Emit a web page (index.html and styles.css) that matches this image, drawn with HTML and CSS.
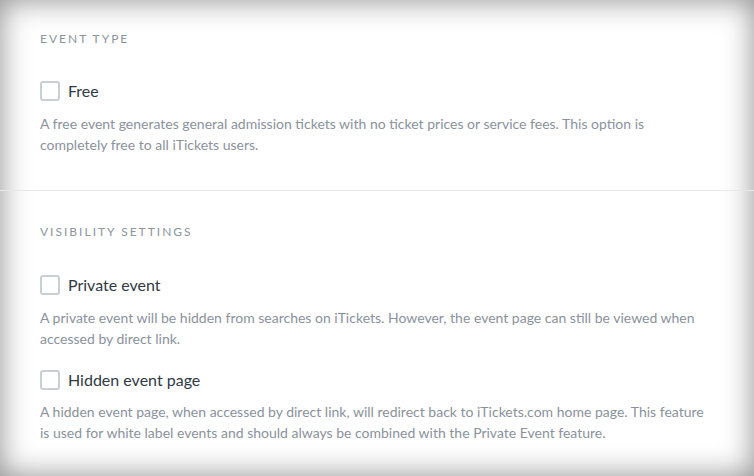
FILE: index.html
```html
<!DOCTYPE html>
<html>
<head>
<meta charset="utf-8">
<link rel="stylesheet" href="styles.css">
</head>
<body>
<div class="frame">
  <section class="section first">
    <h2 class="heading">Event type</h2>
    <label class="option">
      <span class="box"></span>
      <span class="label">Free</span>
    </label>
    <p class="desc">A free event generates general admission tickets with no ticket prices or service fees. This option is completely free to all iTickets users.</p>
  </section>
  <section class="section second">
    <h2 class="heading">Visibility settings</h2>
    <label class="option">
      <span class="box"></span>
      <span class="label">Private event</span>
    </label>
    <p class="desc">A private event will be hidden from searches on iTickets. However, the event page can still be viewed when accessed by direct link.</p>
    <label class="option">
      <span class="box"></span>
      <span class="label">Hidden event page</span>
    </label>
    <p class="desc">A hidden event page, when accessed by direct link, will redirect back to iTickets.com home page. This feature is used for white label events and should always be combined with the Private Event feature.</p>
  </section>
</div>
</body>
</html>
```

FILE: styles.css
```css
html, body {
  margin: 0;
  padding: 0;
  width: 754px;
  height: 476px;
  overflow: hidden;
  background: #fff;
}
body {
  font-family: Lato, "Noto Sans", sans-serif;
}
.frame {
  width: 754px;
  height: 476px;
  box-sizing: border-box;
  box-shadow: inset 0 0 30px rgba(0,0,0,0.45);
}
.section {
  padding: 0 40px;
}
.first {
  padding-top: 31px;
  padding-bottom: 35px;
  border-bottom: 1px solid #e6e9ec;
}
.second {
  padding-top: 33px;
}
.heading {
  margin: 0;
  font-size: 12px;
  font-weight: 400;
  letter-spacing: 2px;
  text-transform: uppercase;
  color: #8c949d;
  line-height: 16px;
}
.option {
  display: flex;
  align-items: center;
  gap: 8px;
  margin-top: 35px;
}
.first .option { margin-top: 34px; }
.box {
  width: 20px;
  height: 20px;
  box-sizing: border-box;
  border: 2px solid #c8d0d4;
  border-radius: 3px;
  background: #fff;
}
.label {
  font-size: 16px;
  color: #2f3944;
  line-height: 20px;
}
.desc {
  margin: 12px 0 0;
  font-size: 14px;
  line-height: 21px;
  color: #8a929c;
}
.desc + .option { margin-top: 21px; }
.desc + .option + .desc { margin-top: 11px; }
```
